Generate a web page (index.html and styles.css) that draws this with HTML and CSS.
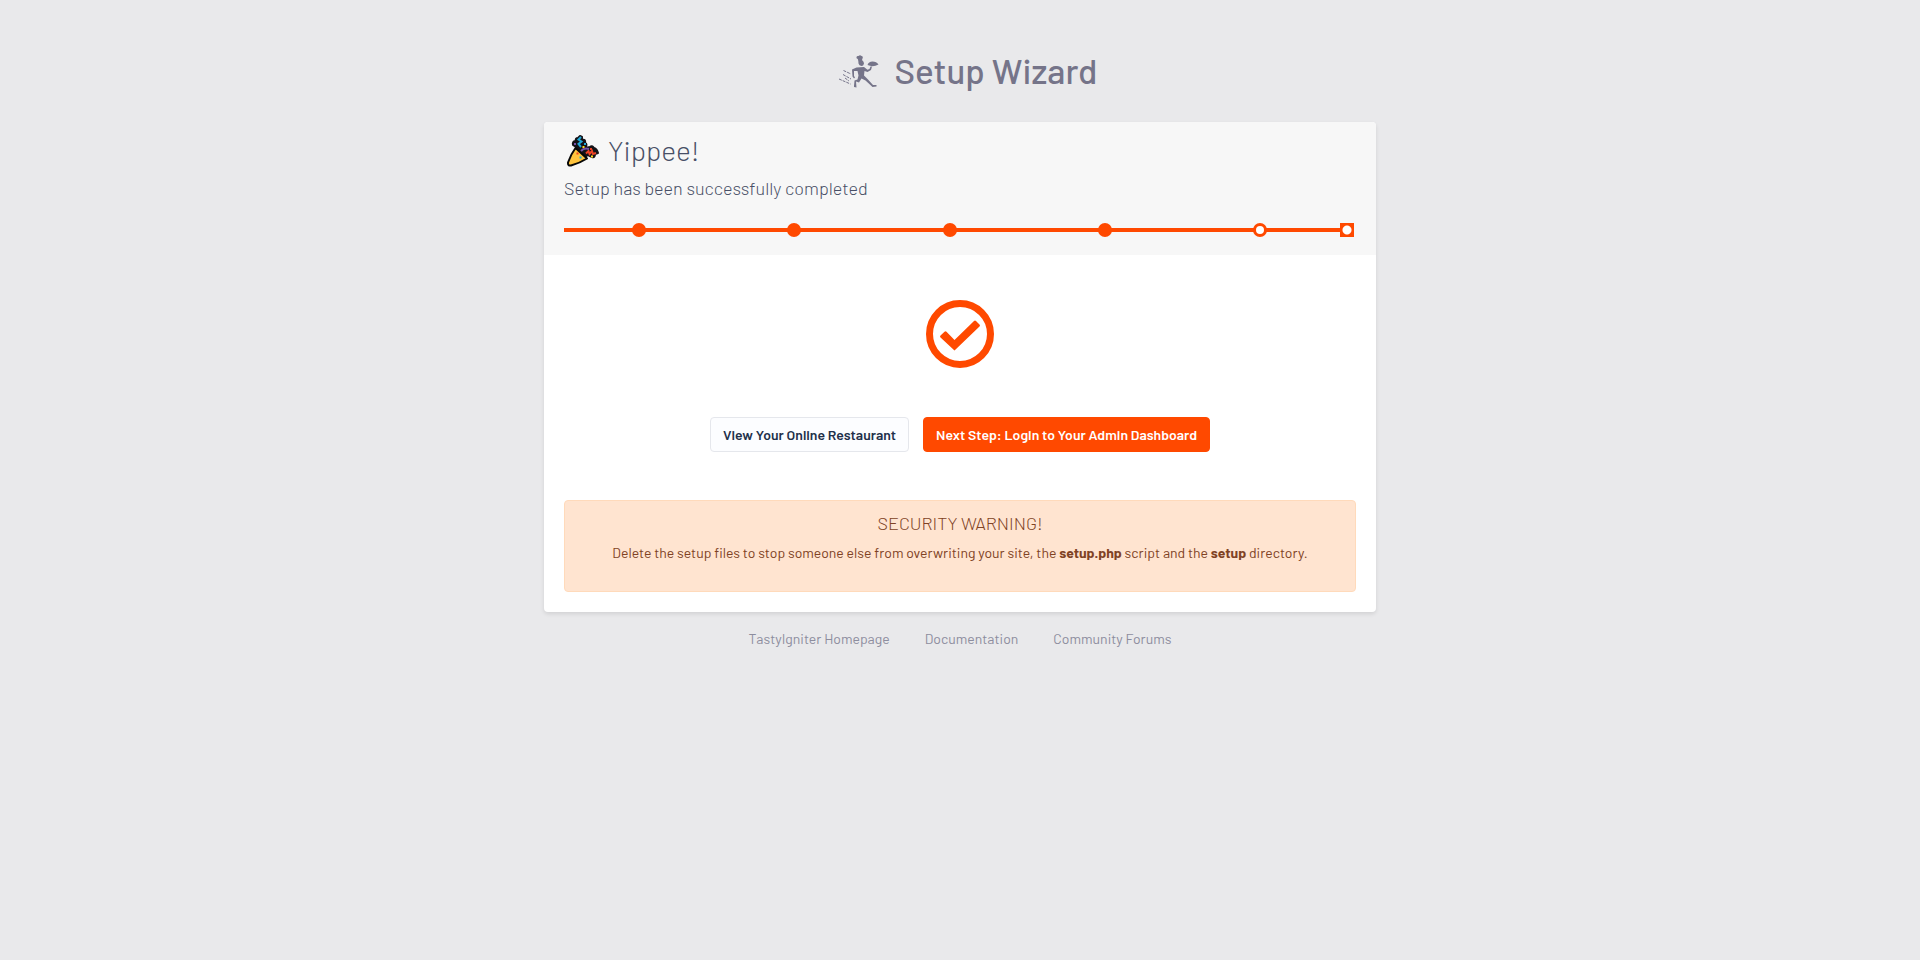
FILE: index.html
```html
<!DOCTYPE html>
<html lang="en">
<head>
<meta charset="utf-8">
<meta name="viewport" content="width=device-width, initial-scale=1">
<title>Setup Wizard</title>
<link rel="stylesheet" href="styles.css">
</head>
<body>
<header class="brand">
  <svg class="brand-logo" viewBox="0 0 44 40" aria-hidden="true">
    <path d="M19.300 11 18.800 9Q17 8.500 17.500 7Q18 5.500 19.500 6Q21 4.700 22.500 6Q24.500 6.500 23.500 8.500L23 10Q25 11.500 25 13.500Q24.500 16 22.500 16Q20 15.500 19.500 13.500Z"/>
    <path d="M17.500 17.500 25 17 28.500 19.800 30.500 19 31.500 16.500 33 16.500 32 20 28.500 22 25.500 21 25 25.500 29 29.500 34 35 37.500 35 37.500 36.500 33.500 37 26.500 30.500 22.500 28.500 20 32.500 17 31.500 17.500 37.500 15 37 15 36 15.500 30.500 18.500 29.500 19.500 25.500 18.500 21 15 21 15 26 16 27.500 15 28.500 13.500 26.500 13 19.500Z"/>
    <path d="M28.500 15Q29.500 11.500 33.500 11.500Q37.500 11.500 39.500 14.500Q34 17.500 28.500 15Z"/>
    <path class="trail" d="M4.500 20.500 12 24M4 24.500 12 29M0 29 11.500 34M6 28 10 31"/>
  </svg>
  <h1 class="brand-title">Setup Wizard</h1>
</header>
<main class="card">
  <section class="card-head">
    <h2 class="card-title">
      <svg class="party" viewBox="0 0 50 40" aria-hidden="true">
        <g transform="translate(0 1)">
        <path class="ink" d="M16 16 13 14Q12 10 16 10Q15 7 18 7L20 5 22 6 22 9Q26 8 25 12Q28 13 25 17L30 16Q32 14 34 17Q37 18 38 22L35 23Q35 27 32 26L28 24 25 26Z"/>
        <path class="cone" d="M15.500 17 27 27.500Q20 32 11 34.500Q7.500 35 8 31.500Q11 23 15.500 17Z"/>
        <path class="cyan" d="M21 6 18.500 8.500 21.500 10.500 18.500 13 21 16"/>
        <path class="red" d="M26 22.500 28.500 20 29.500 23 32 20 33 23 36 22M30 18h2"/>
        <path class="violet" d="M21 20Q24 16.500 29 18M14 13h2"/>
        <path class="cyan" d="M24 13h2"/>
        <path class="yellow" d="M22.500 16h2M31 25.500h2"/>
        <path class="red" d="M16.500 22.500h2"/>
        <path class="cyan" d="M19.500 26.500h2"/>
        </g>
      </svg>
      <span>Yippee!</span>
    </h2>
    <p class="card-subtitle">Setup has been successfully completed</p>
    <ol class="steps" aria-label="Setup progress">
      <li class="step"><span class="dot"></span></li>
      <li class="step"><span class="dot"></span></li>
      <li class="step"><span class="dot"></span></li>
      <li class="step"><span class="dot"></span></li>
      <li class="step"><span class="dot open"></span></li>
      <li class="step last"><span class="dot final"></span></li>
    </ol>
  </section>
  <section class="card-body">
    <svg class="check" viewBox="0 0 68 68" role="img" aria-label="Completed">
      <circle cx="34" cy="34" r="30.500"/>
      <path d="M14.500 37.500Q13.500 36.500 14.500 35.500L18.500 31.700Q19.500 30.800 20.500 31.700L28.500 40 48 21Q49 20 50 21L53.500 24.500Q54.500 25.500 53.500 26.500L28.500 50.500Z"/>
    </svg>
    <div class="actions">
      <a class="btn btn-light" href="#">View Your Online Restaurant</a>
      <a class="btn btn-primary" href="#">Next Step: Login to Your Admin Dashboard</a>
    </div>
    <div class="alert" role="alert">
      <h3 class="alert-title">SECURITY WARNING!</h3>
      <p class="alert-text">Delete the setup files to stop someone else from overwriting your site, the <strong>setup.php</strong> script and the <strong>setup</strong> directory.</p>
    </div>
  </section>
</main>
<footer class="links">
  <a href="#">TastyIgniter Homepage</a>
  <a href="#">Documentation</a>
  <a href="#">Community Forums</a>
</footer>
</body>
</html>
```
FILE: styles.css
```css
* { box-sizing: border-box; }
body {
  margin: 0;
  padding: 46px 16px;
  background: #e9e9eb;
  color: #484f66;
  font-family: Barlow, Roboto, sans-serif;
  font-size: 14px;
  line-height: 20px;
}
h1, h2, h3, p, ol { margin: 0; padding: 0; font-weight: 400; }
a { text-decoration: none; }
.brand {
  display: flex;
  align-items: center;
  justify-content: center;
  gap: 12px;
  margin-bottom: 28px;
  padding-left: 16px;
}
.brand-logo { width: 44px; height: 40px; fill: #757489; }
.trail { fill: none; stroke: #757489; stroke-width: 1; stroke-dasharray: 3 1; }
.brand-title {
  color: #757489;
  font-size: 35px;
  line-height: 48px;
  font-weight: 500;
}
.card {
  max-width: 832px;
  margin: 0 auto;
  border-radius: 4px;
  background: #fff;
  box-shadow: 0 2px 4px rgba(0, 0, 0, .1);
}
.card-head {
  padding: 8px 20px 18px;
  border-radius: 4px 4px 0 0;
  background: #f7f7f7;
}
.card-title {
  display: flex;
  align-items: center;
  font-size: 28px;
  line-height: 40px;
  font-weight: 300;
}
.party { width: 50px; height: 40px; margin: 0 -2px 0 -4px; }
.ink { fill: #151318; stroke: #151318; stroke-width: 2; stroke-linejoin: round; }
.cone { fill: #ffc43d; stroke: #080808; stroke-width: 2; stroke-linejoin: round; }
.cyan, .red, .violet, .yellow { fill: none; stroke-width: 2; }
.cyan { stroke: #20aad8; }
.red { stroke: #ed4325; }
.violet { stroke: #7652a8; }
.yellow { stroke: #ffdc22; }
.card-subtitle { margin-top: 5px; font-size: 18px; line-height: 26px; font-weight: 300; }
.steps {
  display: flex;
  margin: 22px 2px 0 0;
  list-style: none;
  background: linear-gradient(#ff4900, #ff4900) center / 100% 4px no-repeat;
}
.step {
  flex: 1;
  display: flex;
  justify-content: center;
  padding-right: 5px;
}
.step.last { flex: none; padding: 0; }
.dot { width: 14px; height: 14px; border-radius: 50%; background: #ff4900; }
.dot.open { border: 3px solid #ff4900; background: #fff; }
.dot.final {
  border-radius: 0;
  background: radial-gradient(circle, #fff 4px, #ff4900 5px);
}
.card-body { padding: 45px 20px 20px; text-align: center; }
.check { display: block; width: 68px; height: 68px; margin: 0 auto 49px; fill: #ff4900; }
.check circle { fill: none; stroke: #ff4900; stroke-width: 7; }
.actions { display: flex; flex-wrap: wrap; justify-content: center; gap: 14px; }
.btn {
  padding: 7px 12px;
  border: 1px solid #ff4900;
  border-radius: 4px;
  font-size: 14px;
  line-height: 19px;
  font-weight: 600;
}
.btn-light { border-color: #e5e7ec; background: #fcfdff; color: #22304a; }
.btn-primary { background: #ff4900; color: #fff; }
.alert {
  margin-top: 48px;
  padding: 11px 19px 28px;
  border: 1px solid #ffdabb;
  border-radius: 4px;
  background: #ffe4d0;
  color: #804224;
}
.alert-title { font-size: 18px; line-height: 22px; font-weight: 300; }
.alert-text { margin-top: 8px; line-height: 21px; }
.links { display: flex; flex-wrap: wrap; justify-content: center; gap: 35px; padding-top: 17px; }
.links a { color: #8d8d9e; }
```
